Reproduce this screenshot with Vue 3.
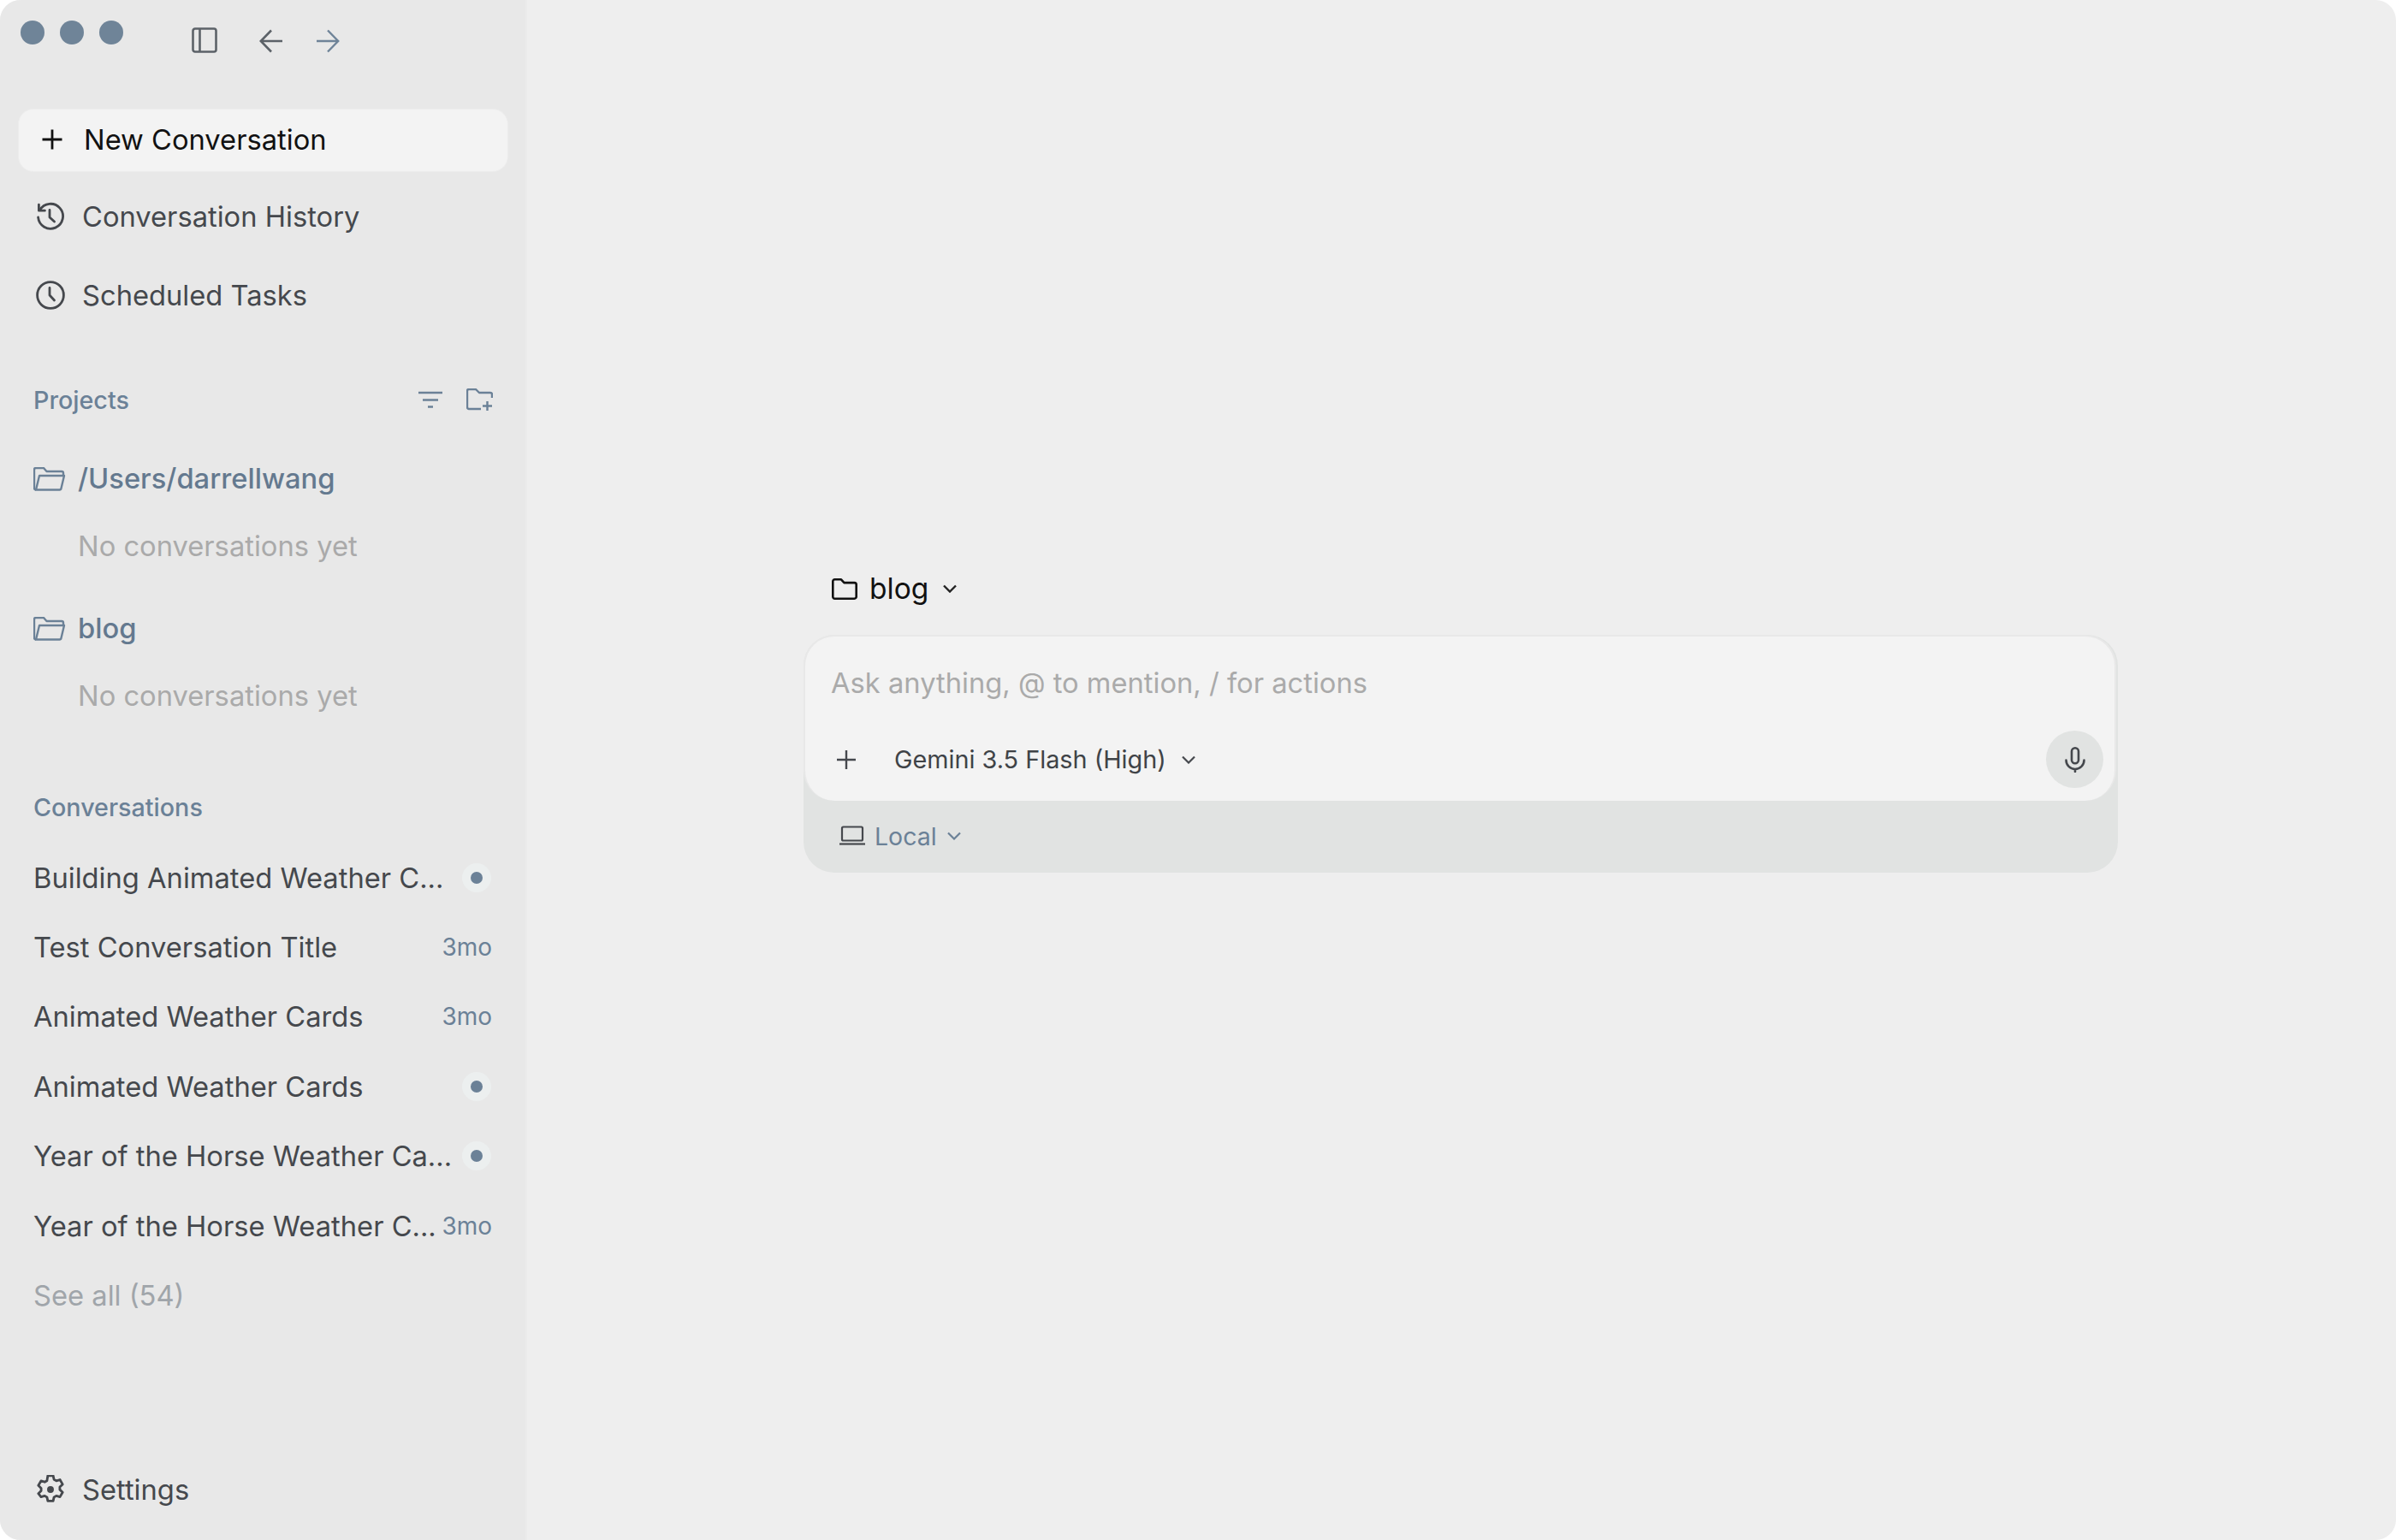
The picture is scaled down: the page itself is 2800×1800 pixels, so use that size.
<template>
  <div class="window">
    <aside class="sidebar">
      <div class="titlebar">
        <div class="traffic">
          <span class="light"></span>
          <span class="light"></span>
          <span class="light"></span>
        </div>
        <svg class="toggle-icon" width="30" height="30" viewBox="0 0 30 30" fill="none" stroke="#5c6268" stroke-width="2.6">
          <rect x="1.5" y="1.5" width="27" height="27" rx="2.5" />
          <path d="M9.5 1.5v27" />
        </svg>
        <svg class="back-icon" width="28" height="28" viewBox="0 0 28 28" fill="none" stroke="#5c6268" stroke-width="2.6">
          <path d="M27 14H2M14 1.5 1.8 14 14 26.5" />
        </svg>
        <svg class="forward-icon" width="28" height="28" viewBox="0 0 28 28" fill="none" stroke="#6e8398" stroke-width="2.4">
          <path d="M1 14h25M14 1.5 26.2 14 14 26.5" />
        </svg>
      </div>

      <button class="new-btn">
        <svg width="26" height="26" viewBox="0 0 26 26" fill="none" stroke="#111" stroke-width="2.8">
          <path d="M13 1.5v23M1.5 13h23" />
        </svg>
        <span>New Conversation</span>
      </button>

      <div class="nav-row first">
        <svg width="34" height="34" viewBox="0 0 34 34" fill="none" stroke="#45484d" stroke-width="2.8" stroke-linecap="round" stroke-linejoin="round">
          <path d="M4.5 9.5A14.5 14.5 0 1 1 2.6 18" />
          <path d="M3.4 3.2v7h7" />
          <path d="M16 9.5V18l5.5 5" />
        </svg>
        <span>Conversation History</span>
      </div>
      <div class="nav-row">
        <svg width="34" height="34" viewBox="0 0 34 34" fill="none" stroke="#45484d" stroke-width="2.8" stroke-linecap="round" stroke-linejoin="round">
          <circle cx="17" cy="17" r="15.4" />
          <path d="M16 8.5V17l5.5 6" />
        </svg>
        <span>Scheduled Tasks</span>
      </div>

      <div class="section-head projects-head">
        <span>Projects</span>
        <div class="head-icons">
          <svg width="28" height="20" viewBox="0 0 28 20" fill="none" stroke="#6b8197" stroke-width="2.4">
            <path d="M0 2h28M5 10.500h18M11 18.500h6" />
          </svg>
          <svg width="31" height="27" viewBox="0 0 31 27" fill="none" stroke="#6b8197" stroke-width="2.4" stroke-linejoin="round">
            <path d="M17 24H3a2 2 0 0 1-2-2V3a2 2 0 0 1 2-2h8l4 4h13a2 2 0 0 1 2 2v4" />
            <path d="M24.500 15v11M19 20.500h11" />
          </svg>
        </div>
      </div>

      <div v-for="project in projects" :key="project" class="project">
        <div class="project-name">
          <svg width="38" height="28" viewBox="0 0 38 28" fill="none" stroke="#6b8197" stroke-width="2.400" stroke-linejoin="round">
            <path d="M3 26.500a2 2 0 0 1-2-2V3a2 2 0 0 1 2-2h9l3.500 4H33a2 2 0 0 1 2 2v3" />
            <path d="M3 26.500 7 10h29l-3.500 14.800a2 2 0 0 1-2 1.700Z" />
          </svg>
          <span>{{ project }}</span>
        </div>
        <div class="project-empty">No conversations yet</div>
      </div>

      <div class="section-head conversations-head">
        <span>Conversations</span>
      </div>

      <div class="conversations">
        <div v-for="(item, index) in conversations" :key="index" class="conversation">
          <span class="conversation-title">{{ item.title }}</span>
          <span v-if="item.age" class="age">{{ item.age }}</span>
          <span v-else class="status"><i></i></span>
        </div>
        <div class="conversation see-all">See all (54)</div>
      </div>

      <div class="nav-row settings">
        <svg width="34" height="34" viewBox="0 0 24 24" fill="none" stroke="#45484d" stroke-width="2" stroke-linejoin="round">
          <path d="M9.800 1.200h4.400l.7 3.100 1.900 1.100 3-.9 2.200 3.800-2.300 2.200v2.200l2.300 2.200-2.200 3.800-3-.9-1.900 1.100-.7 3.100H9.800l-.7-3.100-1.900-1.100-3 .9L2 15.900l2.300-2.200v-2.200L2 9.300l2.200-3.800 3 .9 1.900-1.100Z" transform="translate(0 -.6)" />
          <circle cx="12" cy="12" r="2.800" fill="#45484d" stroke="none" />
        </svg>
        <span>Settings</span>
      </div>
    </aside>

    <main class="main">
      <div class="composer-wrap">
        <div class="workspace">
          <svg width="30" height="25" viewBox="0 0 30 25" fill="none" stroke="#111" stroke-width="2.600" stroke-linejoin="round">
            <path d="M3.500 23.700a2.200 2.200 0 0 1-2.200-2.200V3.500a2.200 2.200 0 0 1 2.200-2.200h7.500l3.500 3.800h12a2.200 2.200 0 0 1 2.200 2.200v14a2.200 2.200 0 0 1-2.200 2.400Z" />
          </svg>
          <span>blog</span>
          <svg class="workspace-chevron" width="16" height="10" viewBox="0 0 16 10" fill="none" stroke="#222" stroke-width="2.400">
            <path d="m1 1.500 7 7 7-7" />
          </svg>
        </div>

        <div class="composer">
          <div class="composer-card">
            <div class="placeholder">Ask anything, @ to mention, / for actions</div>
            <div class="composer-tools">
              <svg width="22" height="22" viewBox="0 0 22 22" fill="none" stroke="#45484d" stroke-width="2.400">
                <path d="M11 0v22M0 11h22" />
              </svg>
              <span class="model">Gemini 3.5 Flash (High)</span>
              <svg class="model-chevron" width="16" height="10" viewBox="0 0 16 10" fill="none" stroke="#45484d" stroke-width="2.200">
                <path d="m1 1.500 7 7 7-7" />
              </svg>
              <button class="mic">
                <svg width="24" height="30" viewBox="0 0 24 30" fill="none" stroke="#45484d" stroke-width="2.600" stroke-linecap="round">
                  <rect x="8" y="1.300" width="8" height="18" rx="4" />
                  <path d="M1.500 15.500a10.500 10.500 0 0 0 21 0M12 26v3" />
                </svg>
              </button>
            </div>
          </div>
          <div class="composer-footer">
            <svg width="32" height="24" viewBox="0 0 32 24" fill="none" stroke="#45484d" stroke-width="2.200">
              <rect x="4" y="1.500" width="24" height="16" rx="1.500" />
              <path d="M1 21.500h30" />
            </svg>
            <span>Local</span>
            <svg class="local-chevron" width="16" height="10" viewBox="0 0 16 10" fill="none" stroke="#6b8197" stroke-width="2.200">
              <path d="m1 1.500 7 7 7-7" />
            </svg>
          </div>
        </div>
      </div>
    </main>
  </div>
</template>

<script setup>
const projects = ['/Users/darrellwang', 'blog']

const conversations = [
  { title: 'Building Animated Weather C...' },
  { title: 'Test Conversation Title', age: '3mo' },
  { title: 'Animated Weather Cards', age: '3mo' },
  { title: 'Animated Weather Cards' },
  { title: 'Year of the Horse Weather Ca...' },
  { title: 'Year of the Horse Weather C...', age: '3mo' },
]
</script>

<style>
html,
body {
  margin: 0;
  background: #fff;
}
</style>

<style scoped>
.window {
  display: flex;
  width: 2800px;
  height: 1800px;
  overflow: hidden;
  border-radius: 24px;
  background: #eeeeee;
  font-family: Inter, "Liberation Sans", sans-serif;
  font-size: 32.7px;
  color: #45484d;
}

.sidebar {
  display: flex;
  flex-direction: column;
  flex: none;
  box-sizing: border-box;
  width: 616px;
  height: 1800px;
  padding: 0 23px 13px 21px;
  background: #e8e8e8;
  border-right: 2px solid #ebebeb;
}

.titlebar {
  display: flex;
  align-items: flex-start;
  flex: none;
  height: 127px;
}
.traffic {
  display: flex;
  gap: 18px;
  margin: 24px 0 0 3px;
}
.light {
  width: 28px;
  height: 28px;
  border-radius: 50%;
  background: #6f8498;
}
.toggle-icon {
  margin: 32px 0 0 80px;
}
.back-icon {
  margin: 34px 0 0 49px;
}
.forward-icon {
  margin: 34px 0 0 38px;
}

.new-btn {
  display: flex;
  align-items: center;
  flex: none;
  box-sizing: border-box;
  width: 573px;
  height: 74px;
  padding: 0 0 2px 26px;
  gap: 24px;
  background: #f3f3f3;
  border: 1px solid #ececec;
  border-radius: 18px;
  font: inherit;
  color: #111;
}

.nav-row {
  display: flex;
  align-items: center;
  flex: none;
  height: 92px;
  gap: 20px;
  padding-left: 21px;
}
.nav-row.first {
  margin-top: 6px;
}
.nav-row.settings {
  margin-top: auto;
}

.section-head {
  display: flex;
  align-items: center;
  justify-content: space-between;
  flex: none;
  height: 40px;
  padding: 0 14px 0 18px;
  font-size: 28.700px;
  font-weight: 500;
  color: #6b8197;
}
.projects-head {
  margin-top: 56px;
  margin-bottom: 34px;
}
.conversations-head {
  margin-top: 52px;
  margin-bottom: 22px;
}
.head-icons {
  display: flex;
  align-items: center;
  gap: 28px;
  padding-right: 1px;
}

.project {
  flex: none;
  margin-bottom: 19px;
}
.project-name {
  display: flex;
  align-items: center;
  height: 78px;
  gap: 14px;
  padding-left: 18px;
  font-weight: 500;
  color: #64798f;
}
.project-name span {
  margin-top: -2px;
}
.project-empty {
  display: flex;
  align-items: center;
  height: 78px;
  padding-left: 70px;
  color: #aaaaaa;
}

.conversations {
  flex: none;
}
.conversation {
  display: flex;
  align-items: center;
  justify-content: space-between;
  height: 81.4px;
  padding: 0 16px 0 18px;
}
.see-all {
  color: #a0a5aa;
}
.age {
  font-size: 28px;
  color: #6b8197;
}
.status {
  display: flex;
  align-items: center;
  justify-content: center;
  width: 34px;
  height: 34px;
  margin-right: 1px;
  border-radius: 50%;
  background: #ecefef;
}
.status i {
  width: 14px;
  height: 14px;
  border-radius: 50%;
  background: #6b8197;
}

.main {
  flex: 1;
  min-width: 0;
  padding: 663px 2px 0 0;
}
.composer-wrap {
  width: 1536px;
  margin: 0 auto;
}
.workspace {
  display: flex;
  align-items: center;
  height: 50px;
  padding-left: 33px;
  gap: 14px;
  margin-bottom: 29px;
  font-size: 33.500px;
  color: #111;
}
.workspace-chevron {
  margin-left: 3px;
}

.composer {
  height: 278px;
  border-radius: 36px;
  background: #e1e3e2;
}
.composer-card {
  box-sizing: border-box;
  height: 194px;
  margin-right: 2px;
  border: 2px solid #e8e8e8;
  border-bottom: 0;
  border-radius: 36px;
  background: #f3f3f3;
}
.placeholder {
  padding: 32px 0 0 30px;
  line-height: 44px;
  color: #aaaaaa;
}
.composer-tools {
  display: flex;
  align-items: center;
  margin-top: 34px;
  padding: 0 13px 0 37px;
}
.model {
  margin-left: 45px;
  font-size: 28.800px;
  color: #3f4347;
}
.model-chevron {
  margin-left: 18px;
}
.mic {
  display: flex;
  align-items: center;
  justify-content: center;
  width: 67px;
  height: 67px;
  margin-left: auto;
  padding: 0;
  border: 0;
  border-radius: 50%;
  background: #e1e3e2;
}
.composer-footer {
  display: flex;
  align-items: center;
  height: 84px;
  padding: 0 0 2px 41px;
  box-sizing: border-box;
  gap: 10px;
  font-size: 28.500px;
  color: #6b8197;
}
.local-chevron {
  margin-left: 2px;
}
</style>
